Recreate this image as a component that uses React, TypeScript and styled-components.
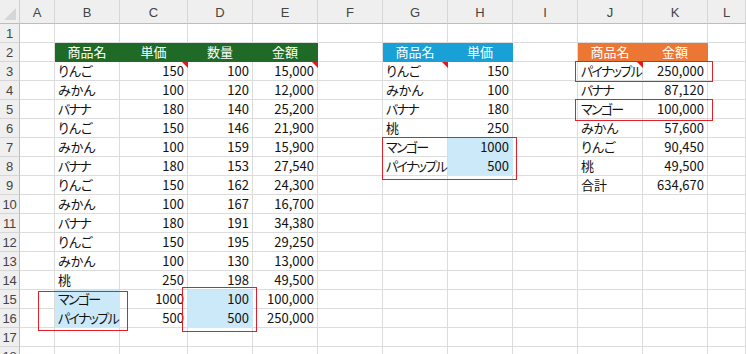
import React from "react";
import styled, { createGlobalStyle } from "styled-components";

const GlobalStyle = createGlobalStyle`
  html, body {
    margin: 0;
    padding: 0;
    background: #ffffff;
  }
`;

const GRID_LINE = "#dcdcdc";
const HEAD_BG = "#efefef";

const GREEN = "#1e6a26";
const BLUE = "#18a0d7";
const ORANGE = "#ec7634";
const LIGHT = "#cbe9f8";

const COLS = ["A", "B", "C", "D", "E", "F", "G", "H", "I", "J", "K", "L"];
const ROWS = Array.from({ length: 18 }, (_, i) => i + 1);

type Align = "left" | "right" | "center";

interface CellDef {
  v: string;
  align?: Align;
  fill?: string;
  color?: string;
  note?: boolean;
}

const cells: Record<string, CellDef> = {};

const put = (ref: string, v: string, extra: Partial<CellDef> = {}) => {
  const isNum = /^[\d,]+$/.test(v);
  cells[ref] = { v, align: isNum ? "right" : "left", ...extra };
};

const head = (ref: string, v: string, fill: string) =>
  put(ref, v, { align: "center", fill, color: "#ffffff" });

// main table
head("B2", "商品名", GREEN);
head("C2", "単価", GREEN);
head("D2", "数量", GREEN);
head("E2", "金額", GREEN);

const mainRows: [string, string, string, string][] = [
  ["りんご", "150", "100", "15,000"],
  ["みかん", "100", "120", "12,000"],
  ["バナナ", "180", "140", "25,200"],
  ["りんご", "150", "146", "21,900"],
  ["みかん", "100", "159", "15,900"],
  ["バナナ", "180", "153", "27,540"],
  ["りんご", "150", "162", "24,300"],
  ["みかん", "100", "167", "16,700"],
  ["バナナ", "180", "191", "34,380"],
  ["りんご", "150", "195", "29,250"],
  ["みかん", "100", "130", "13,000"],
  ["桃", "250", "198", "49,500"],
  ["マンゴー", "1000", "100", "100,000"],
  ["パイナップル", "500", "500", "250,000"],
];
mainRows.forEach((r, i) => {
  const row = i + 3;
  put(`B${row}`, r[0]);
  put(`C${row}`, r[1]);
  put(`D${row}`, r[2]);
  put(`E${row}`, r[3]);
});

// price table
head("G2", "商品名", BLUE);
head("H2", "単価", BLUE);
const priceRows: [string, string][] = [
  ["りんご", "150"],
  ["みかん", "100"],
  ["バナナ", "180"],
  ["桃", "250"],
  ["マンゴー", "1000"],
  ["パイナップル", "500"],
];
priceRows.forEach((r, i) => {
  put(`G${i + 3}`, r[0]);
  put(`H${i + 3}`, r[1]);
});

// summary table
head("J2", "商品名", ORANGE);
head("K2", "金額", ORANGE);
const sumRows: [string, string][] = [
  ["パイナップル", "250,000"],
  ["バナナ", "87,120"],
  ["マンゴー", "100,000"],
  ["みかん", "57,600"],
  ["りんご", "90,450"],
  ["桃", "49,500"],
  ["合計", "634,670"],
];
sumRows.forEach((r, i) => {
  put(`J${i + 3}`, r[0]);
  put(`K${i + 3}`, r[1]);
});

// highlights
["B15", "B16", "D15", "D16", "H7", "H8"].forEach((ref) => {
  cells[ref].fill = LIGHT;
});

// comment markers
["C3", "E3", "G3", "J3"].forEach((ref) => {
  cells[ref].note = true;
});

const redBoxes = [
  { x: 38, y: 291, w: 90, h: 40 },
  { x: 182, y: 287, w: 75, h: 45 },
  { x: 382, y: 137, w: 135, h: 43 },
  { x: 575, y: 61, w: 138, h: 21 },
  { x: 575, y: 99, w: 138, h: 22 },
];

const isKatakana = (s: string) => /[\u30a0-\u30ff]/.test(s);

const Sheet = styled.div`
  position: relative;
  width: 746px;
  height: 354px;
  overflow: hidden;
  background: #ffffff;
`;

const Grid = styled.div`
  display: grid;
  grid-template-columns: 20px 35px 65px 68px repeat(8, 65px) 1fr;
  grid-template-rows: 24px;
  grid-auto-rows: 19px;
`;

const Corner = styled.div`
  position: relative;
  background: ${HEAD_BG};
  border-right: 1px solid #cfcfcf;
  border-bottom: 1px solid #bdbdbd;
  box-sizing: border-box;

  &::after {
    content: "";
    position: absolute;
    right: 3px;
    bottom: 3px;
    width: 0;
    height: 0;
    border-left: 12px solid transparent;
    border-bottom: 12px solid #d6d6d6;
  }
`;

const ColHead = styled.div`
  display: flex;
  align-items: center;
  justify-content: center;
  background: ${HEAD_BG};
  border-right: 1px solid #d6d6d6;
  border-bottom: 1px solid #bdbdbd;
  box-sizing: border-box;
  font-family: "Liberation Sans", "Noto Sans", sans-serif;
  font-size: 13px;
  color: #444444;
  padding-top: 1px;
`;

const RowHead = styled.div`
  display: flex;
  align-items: center;
  justify-content: center;
  background: ${HEAD_BG};
  border-right: 1px solid #bdbdbd;
  border-bottom: 1px solid #d6d6d6;
  box-sizing: border-box;
  font-family: "Liberation Sans", "Noto Sans", sans-serif;
  font-size: 13px;
  color: #444444;
  letter-spacing: -0.3px;
`;

const Cell = styled.div<{
  $align: Align;
  $fill?: string;
  $color?: string;
  $filled: boolean;
}>`
  position: relative;
  display: flex;
  align-items: flex-end;
  justify-content: ${(p) =>
    p.$align === "right" ? "flex-end" : p.$align === "center" ? "center" : "flex-start"};
  padding: 0 3px 0 3px;
  box-sizing: border-box;
  background: ${(p) => p.$fill ?? "transparent"};
  border-right: 1px solid ${(p) => p.$fill ?? GRID_LINE};
  border-bottom: 1px solid ${(p) => p.$fill ?? GRID_LINE};
  color: ${(p) => p.$color ?? "#111111"};
  font-family: "Noto Sans CJK JP", "Noto Sans", sans-serif;
  font-feature-settings: "palt" 1;
  font-size: 13px;
  line-height: 18px;
  white-space: nowrap;
  overflow: visible;
  z-index: ${(p) => (p.$filled ? 1 : "auto")};
`;

const Value = styled.span<{ $narrow: boolean }>`
  letter-spacing: ${(p) => (p.$narrow ? "-1.7px" : "0")};
`;

const NoteMark = styled.span`
  position: absolute;
  top: 0;
  right: -1px;
  width: 0;
  height: 0;
  border-left: 6px solid transparent;
  border-top: 6px solid #e8141c;
`;

const RedBox = styled.div`
  position: absolute;
  border: 1.5px solid #e3202a;
  box-sizing: border-box;
  pointer-events: none;
  z-index: 5;
`;

export default function App() {
  return (
    <>
      <GlobalStyle />
      <Sheet>
        <Grid>
          <Corner />
          {COLS.map((c) => (
            <ColHead key={c}>{c}</ColHead>
          ))}
          {ROWS.map((r) => (
            <React.Fragment key={r}>
              <RowHead>{r}</RowHead>
              {COLS.map((c) => {
                const cell = cells[`${c}${r}`];
                return (
                  <Cell
                    key={c}
                    $align={cell?.align ?? "left"}
                    $fill={cell?.fill}
                    $color={cell?.color}
                    $filled={!!cell}
                  >
                    {cell && (
                      <Value $narrow={cell.align === "left" && isKatakana(cell.v)}>
                        {cell.v}
                      </Value>
                    )}
                    {cell?.note && <NoteMark />}
                  </Cell>
                );
              })}
            </React.Fragment>
          ))}
        </Grid>
        {redBoxes.map((b, i) => (
          <RedBox
            key={i}
            style={{ left: b.x, top: b.y, width: b.w, height: b.h }}
          />
        ))}
      </Sheet>
    </>
  );
}
